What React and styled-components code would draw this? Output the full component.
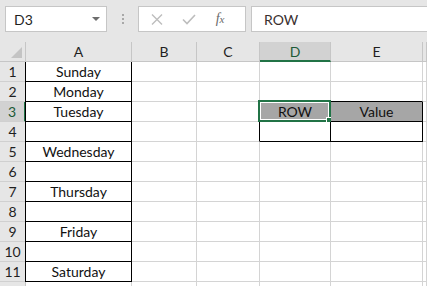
import React from "react";
import styled, { createGlobalStyle } from "styled-components";

const GlobalStyle = createGlobalStyle`
  body {
    margin: 0;
    background: #ffffff;
    font-family: Lato, "Liberation Sans", sans-serif;
    overflow: hidden;
  }
`;

const Window = styled.div`
  width: 427px;
  height: 286px;
  overflow: hidden;
  background: #ffffff;
`;

const FormulaBar = styled.div`
  height: 42px;
  box-sizing: border-box;
  background: #e6e6e6;
  display: flex;
  align-items: flex-start;
  padding: 6px 0 0 5px;
`;

const NameBox = styled.div`
  width: 102px;
  height: 26px;
  box-sizing: border-box;
  border: 1px solid #c6c6c6;
  background: #ffffff;
  display: flex;
  align-items: center;
  justify-content: space-between;
  padding: 0 6px 0 8px;
  font-size: 14px;
  color: #1f1f1f;
`;

const Caret = styled.span`
  width: 0;
  height: 0;
  border-left: 4px solid transparent;
  border-right: 4px solid transparent;
  border-top: 4px solid #6d6d6d;
`;

const Grip = styled.div`
  width: 31px;
  height: 26px;
  display: flex;
  flex-direction: column;
  align-items: center;
  justify-content: center;
  gap: 2px;
  span {
    width: 2px;
    height: 2px;
    background: #a8a8a8;
  }
`;

const ButtonBox = styled.div`
  width: 108px;
  height: 26px;
  box-sizing: border-box;
  border: 1px solid #c6c6c6;
  background: #ffffff;
  display: flex;
  align-items: center;
  padding-left: 12px;
`;

const BarButton = styled.div`
  width: 35px;
  display: flex;
  align-items: center;
  justify-content: flex-start;
`;

const Fx = styled.span`
  font-family: "Liberation Serif", serif;
  font-style: italic;
  font-size: 14px;
  color: #6a6a6a;
  margin-left: 2px;
  sub {
    font-size: 11px;
    vertical-align: baseline;
  }
`;

const FormulaInput = styled.div`
  flex: 1;
  margin-left: 5px;
  height: 26px;
  box-sizing: border-box;
  border: 1px solid #c6c6c6;
  border-right: none;
  background: #ffffff;
  display: flex;
  align-items: center;
  padding-left: 12px;
  font-size: 14px;
  color: #3a3030;
`;

const Sheet = styled.div`
  display: grid;
  grid-template-columns: 26px 106px 65px 63px 71px 92px 1fr;
  grid-auto-rows: 20px;
`;

const Corner = styled.div`
  position: relative;
  background: #e6e6e6;
  box-sizing: border-box;
  border-right: 1px solid #c6c6c6;
  border-bottom: 1px solid #c6c6c6;
  &::after {
    content: "";
    position: absolute;
    right: 3px;
    bottom: 3px;
    width: 0;
    height: 0;
    border-left: 11px solid transparent;
    border-bottom: 11px solid #c4c4c4;
  }
`;

const ColHead = styled.div`
  box-sizing: border-box;
  background: ${(p) => (p.$active ? "#d2d2d2" : "#e6e6e6")};
  border-right: 1px solid #c6c6c6;
  border-bottom: ${(p) => (p.$active ? "2px solid #217346" : "1px solid #c6c6c6")};
  color: ${(p) => (p.$active ? "#1c5a37" : "#1f1f1f")};
  font-size: 14px;
  line-height: 19px;
  text-align: center;
`;

const RowHead = styled.div`
  box-sizing: border-box;
  background: ${(p) => (p.$active ? "#d2d2d2" : "#e6e6e6")};
  border-right: ${(p) => (p.$active ? "2px solid #217346" : "1px solid #c6c6c6")};
  border-bottom: 1px solid #d0d0d0;
  color: ${(p) => (p.$active ? "#1c5a37" : "#1f1f1f")};
  font-size: 14px;
  line-height: 19px;
  text-align: center;
`;

const Cell = styled.div`
  position: relative;
  box-sizing: border-box;
  background: ${(p) => p.$fill || "#ffffff"};
  border-right: 1px solid ${(p) => (p.$right ? "#000000" : "#d4d4d4")};
  border-bottom: 1px solid ${(p) => (p.$bottom ? "#000000" : "#d4d4d4")};
  box-shadow: ${(p) => (p.$left ? "-1px 0 0 #000000" : "none")};
  font-size: 14px;
  line-height: 19px;
  text-align: center;
  color: #111111;
  white-space: nowrap;
`;

const Selection = styled.div`
  position: absolute;
  top: -2px;
  left: -2px;
  right: -1px;
  bottom: -1px;
  border: 2px solid #217346;
  box-shadow: inset 0 0 0 1px #ffffff;
  pointer-events: none;
`;

const FillHandle = styled.div`
  position: absolute;
  right: -4px;
  bottom: -4px;
  width: 5px;
  height: 5px;
  background: #217346;
  border: 1px solid #ffffff;
`;

const columns = ["A", "B", "C", "D", "E", ""];

const days = {
  1: "Sunday",
  2: "Monday",
  3: "Tuesday",
  5: "Wednesday",
  7: "Thursday",
  9: "Friday",
  11: "Saturday",
};

const CrossIcon = () => (
  <svg width="12" height="11" viewBox="0 0 12 11">
    <path d="M1 0.5 L11 10.5 M11 0.5 L1 10.5" stroke="#bdbdbd" strokeWidth="1.4" fill="none" />
  </svg>
);

const CheckIcon = () => (
  <svg width="14" height="11" viewBox="0 0 14 11">
    <path d="M1 5.5 L5 9.5 L13 1" stroke="#bdbdbd" strokeWidth="1.6" fill="none" />
  </svg>
);

const cellProps = (row, col) => {
  const p = {};
  if (col === "A" && row <= 11) {
    p.$right = true;
    p.$bottom = true;
    p.$left = true;
  }
  if ((col === "D" || col === "E") && row === 2) p.$bottom = true;
  if (col === "C" && (row === 3 || row === 4)) p.$right = true;
  if ((col === "D" || col === "E") && (row === 3 || row === 4)) {
    p.$right = true;
    p.$bottom = true;
  }
  if ((col === "D" || col === "E") && row === 3) p.$fill = "#a6a6a6";
  return p;
};

const cellText = (row, col) => {
  if (col === "A") return days[row] || "";
  if (row === 3 && col === "D") return "ROW";
  if (row === 3 && col === "E") return "Value";
  return "";
};

const App = () => {
  // row 12 only peeks in at the bottom edge, its label stays out of view
  const rows = Array.from({ length: 12 }, (_, i) => i + 1);
  return (
    <Window>
      <GlobalStyle />
      <FormulaBar>
        <NameBox>
          D3
          <Caret />
        </NameBox>
        <Grip>
          <span />
          <span />
          <span />
        </Grip>
        <ButtonBox>
          <BarButton>
            <CrossIcon />
          </BarButton>
          <BarButton>
            <CheckIcon />
          </BarButton>
          <BarButton>
            <Fx>
              f<sub>x</sub>
            </Fx>
          </BarButton>
        </ButtonBox>
        <FormulaInput>ROW</FormulaInput>
      </FormulaBar>
      <Sheet>
        <Corner />
        {columns.map((c, i) => (
          <ColHead key={i} $active={c === "D"}>
            {c}
          </ColHead>
        ))}
        {rows.map((r) => (
          <React.Fragment key={r}>
            <RowHead $active={r === 3}>{r <= 11 ? r : ""}</RowHead>
            {columns.map((c, i) => (
              <Cell key={i} {...cellProps(r, c)}>
                {cellText(r, c)}
                {r === 3 && c === "D" && (
                  <Selection>
                    <FillHandle />
                  </Selection>
                )}
              </Cell>
            ))}
          </React.Fragment>
        ))}
      </Sheet>
    </Window>
  );
};

export default App;
